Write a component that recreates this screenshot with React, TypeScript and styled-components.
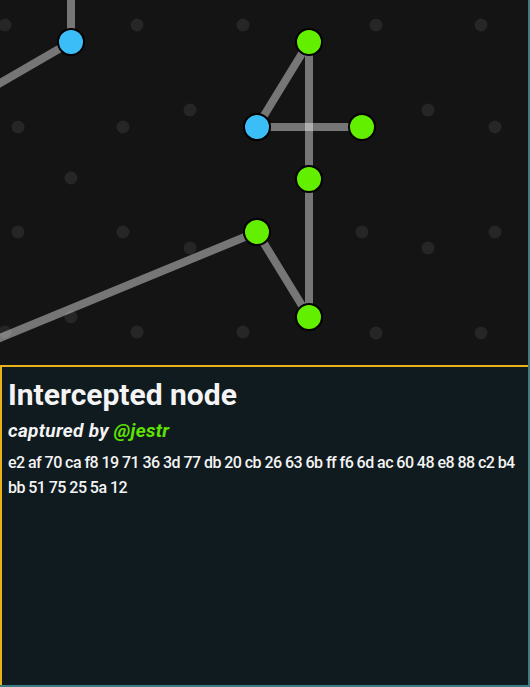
import styled, { createGlobalStyle } from "styled-components";

const GlobalStyle = createGlobalStyle`
  html, body {
    margin: 0;
    padding: 0;
    background: #101b20;
  }
  #root {
    width: 530px;
    height: 687px;
  }
`;

type NodeKind = "relay" | "host";

interface GraphNode {
  id: string;
  x: number;
  y: number;
  kind: NodeKind;
}

const dots: [number, number][] = [
  [5, 25], [137, 25], [243, 25], [376, 25], [481, 25],
  [190, 110], [428, 110],
  [18, 127], [123, 127], [495, 127],
  [71, 178],
  [18, 232], [123, 232], [362, 232], [495, 232],
  [190, 248], [428, 248],
  [71, 317],
  [5, 332], [137, 332], [243, 332], [376, 333], [481, 333],
];

const nodes: GraphNode[] = [
  { id: "a", x: 71, y: 42, kind: "relay" },
  { id: "b", x: 309, y: 42, kind: "host" },
  { id: "c", x: 257, y: 127, kind: "relay" },
  { id: "d", x: 362, y: 127, kind: "host" },
  { id: "e", x: 309, y: 179, kind: "host" },
  { id: "f", x: 257, y: 232, kind: "host" },
  { id: "g", x: 309, y: 317, kind: "host" },
];

// edges that leave the visible area are given as raw points
const edges: [number, number, number, number][] = [
  [71, 42, 71, -10],
  [71, 42, -10, 89],
  [309, 42, 257, 127],
  [309, 42, 309, 179],
  [309, 179, 309, 317],
  [257, 127, 362, 127],
  [257, 232, 309, 317],
  [257, 232, -10, 342],
];

export default function App() {
  return (
    <>
      <GlobalStyle />
      <Frame>
        <Canvas>
          <svg width="528" height="365" viewBox="0 0 528 365">
            {dots.map(([x, y], i) => (
              <circle key={i} cx={x} cy={y} r={6.5} fill="#262626" />
            ))}
            {edges.map(([x1, y1, x2, y2], i) => (
              <line
                key={i}
                x1={x1}
                y1={y1}
                x2={x2}
                y2={y2}
                stroke="rgba(255,255,255,0.42)"
                strokeWidth={8}
              />
            ))}
            {nodes.map((n) => (
              <circle
                key={n.id}
                cx={n.x}
                cy={n.y}
                r={13}
                fill={n.kind === "relay" ? "#3bbdf8" : "#62ef00"}
                stroke="#000"
                strokeWidth={2}
              />
            ))}
          </svg>
        </Canvas>
        <Painel>
          <Titulo>Intercepted node</Titulo>
          <Captura>
            captured by <Autor>@jestr</Autor>
          </Captura>
          <Hash>
            e2 af 70 ca f8 19 71 36 3d 77 db 20 cb 26 63 6b ff f6 6d ac 60 48 e8 88 c2 b4 bb 51 75 25 5a 12
          </Hash>
        </Painel>
      </Frame>
    </>
  );
}

const Frame = styled.div`
  display: flex;
  flex-direction: column;
  width: 530px;
  height: 687px;
  box-sizing: border-box;
  border-right: 2px solid #3b7d84;
  border-bottom: 2px solid #3b7d84;
  font-family: Roboto, "Liberation Sans", sans-serif;
`;

const Canvas = styled.div`
  height: 365px;
  flex-shrink: 0;
  background-color: #141414;
  overflow: hidden;

  svg {
    display: block;
  }
`;

const Painel = styled.section`
  flex: 1;
  background-color: #101b20;
  border-top: 2px solid #e9b21a;
  border-left: 2px solid #e9b21a;
  padding: 8px 8px 0 6px;
  color: #f4f4f4;
`;

const Titulo = styled.h1`
  margin: 0;
  font-size: 30px;
  font-weight: 700;
  line-height: 40px;
`;

const Captura = styled.p`
  margin: 4px 0 0;
  font-size: 19px;
  font-weight: 700;
  font-style: italic;
  line-height: 24px;
  letter-spacing: 0.3px;
`;

const Autor = styled.span`
  color: #5fe300;
`;

const Hash = styled.p`
  margin: 7px 0 0;
  font-size: 16px;
  font-weight: 500;
  line-height: 25px;
  letter-spacing: -0.55px;
`;
